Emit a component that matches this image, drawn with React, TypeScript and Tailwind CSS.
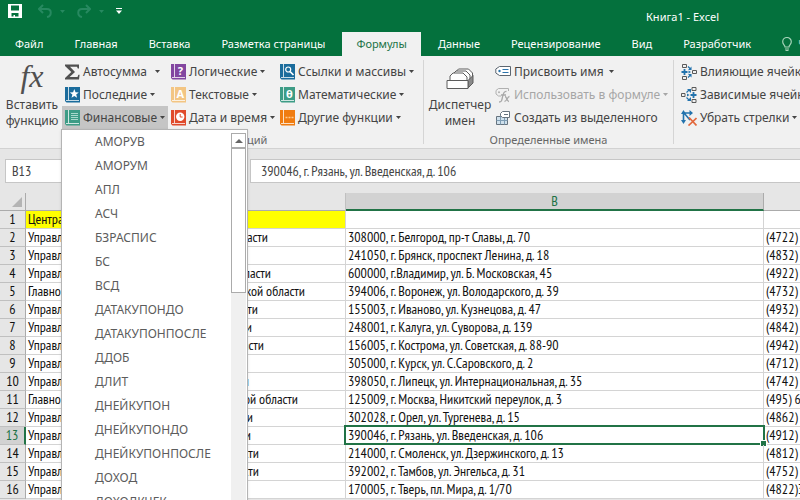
import type { ReactNode } from "react"

const tabs = [
  "Файл",
  "Главная",
  "Вставка",
  "Разметка страницы",
  "Формулы",
  "Данные",
  "Рецензирование",
  "Вид",
  "Разработчик",
]

const financeFunctions = [
  "АМОРУВ",
  "АМОРУМ",
  "АПЛ",
  "АСЧ",
  "БЗРАСПИС",
  "БС",
  "ВСД",
  "ДАТАКУПОНДО",
  "ДАТАКУПОНПОСЛЕ",
  "ДДОБ",
  "ДЛИТ",
  "ДНЕЙКУПОН",
  "ДНЕЙКУПОНДО",
  "ДНЕЙКУПОНПОСЛЕ",
  "ДОХОД",
  "ДОХОДКЧЕК",
]

// tailWidth is how far the office name runs from the left edge of column A
const rows = [
  { head: "Центральный", tail: "", tailWidth: 0, address: "", phone: "" },
  { head: "Управление", tail: "области", tailWidth: 242, address: "308000, г. Белгород, пр-т Славы, д. 70", phone: "(4722)" },
  { head: "Управление", tail: "", tailWidth: 0, address: "241050, г. Брянск, проспект Ленина, д. 18", phone: "(4832)" },
  { head: "Управление", tail: "области", tailWidth: 245, address: "600000, г.Владимир, ул. Б. Московская, 45", phone: "(4922)" },
  { head: "Главное", tail: "ской области", tailWidth: 279, address: "394006, г. Воронеж, ул. Володарского, д. 39", phone: "(4732)" },
  { head: "Управление", tail: "области", tailWidth: 232, address: "155003, г. Иваново, ул. Кузнецова, д. 47", phone: "(4932)" },
  { head: "Управление", tail: "области", tailWidth: 226, address: "248001, г. Калуга, ул. Суворова, д. 139", phone: "(4842)" },
  { head: "Управление", tail: "области", tailWidth: 238, address: "156005, г. Кострома, ул. Советская, д. 88-90", phone: "(4942)" },
  { head: "Управление", tail: "", tailWidth: 0, address: "305000, г. Курск, ул. С.Саровского, д. 2", phone: "(4712)" },
  { head: "Управление", tail: "области", tailWidth: 223, address: "398050, г. Липецк, ул. Интернациональная, д. 35", phone: "(4742)" },
  { head: "Главное", tail: "ской области", tailWidth: 272, address: "125009, г. Москва, Никитский переулок, д. 3", phone: "(495) 694" },
  { head: "Управление", tail: "области", tailWidth: 227, address: "302028, г. Орел, ул. Тургенева, д. 15", phone: "(4862) 4" },
  { head: "Управление", tail: "области", tailWidth: 225, address: "390046, г. Рязань, ул. Введенская, д. 106", phone: "(4912)" },
  { head: "Управление", tail: "области", tailWidth: 233, address: "214000, г. Смоленск, ул. Дзержинского, д. 13", phone: "(4812)" },
  { head: "Управление", tail: "области", tailWidth: 233, address: "392002, г. Тамбов, ул. Энгельса, д. 31", phone: "(4752)" },
  { head: "Управление", tail: "", tailWidth: 0, address: "170005, г. Тверь, пл. Мира, д. 1/70", phone: "(4822)34" },
]

const activeRow = 13

function Caret({ className = "" }: { className?: string }) {
  return (
    <svg viewBox="0 0 5 3" className={`h-[3px] w-[5px] shrink-0 ${className}`} fill="currentColor" aria-hidden="true">
      <path d="M0 0h5L2.5 3z" />
    </svg>
  )
}

function BookIcon({ color, children }: { color: string; children: ReactNode }) {
  return (
    <svg viewBox="0 0 15 16" className="h-4 w-[15px] shrink-0" aria-hidden="true">
      <path d="M0 0h15v15.500H1.500L0 14z" fill={color} />
      <path d="M3.500 0v13M1 13.500h13" stroke="#fff" strokeWidth="0.900" fill="none" opacity="0.850" />
      {children}
    </svg>
  )
}

function SigmaIcon() {
  return (
    <svg viewBox="0 0 15 16" className="h-4 w-[15px] shrink-0" aria-hidden="true">
      <path
        d="M0 .5h14v4h-1.200L12 2.800H5L10 8l-5.400 5H12.500l.9-2.200h1.200L14 15.500H0v-1.600L6.300 8 0 2z"
        fill="#505050"
      />
    </svg>
  )
}

function StarBook() {
  return (
    <BookIcon color="#1b6c9c">
      <path d="M9.300 2l1.200 3.200 3.300.2-2.600 2.100.9 3.200-2.800-1.800-2.800 1.800.9-3.200-2.600-2.100 3.300-.2z" fill="#fff" />
    </BookIcon>
  )
}

function FinanceBook() {
  return (
    <BookIcon color="#3d9c86">
      <path d="M6 3.500h7M6 5.500h7M6 7.500h7M6 9.500h7" stroke="#b5e0d4" strokeWidth="0.900" />
    </BookIcon>
  )
}

function LetterBook({ color, letter }: { color: string; letter: string }) {
  return (
    <BookIcon color={color}>
      <text x="9.300" y="11" textAnchor="middle" fontSize="11" fontWeight="700" fill="#fff">
        {letter}
      </text>
    </BookIcon>
  )
}

function ClockBook() {
  return (
    <BookIcon color="#e04a2b">
      <circle cx="9.200" cy="6.800" r="4.200" fill="#fff" />
      <path d="M9.200 4v3h2.400" fill="none" stroke="#e04a2b" />
    </BookIcon>
  )
}

function SearchBook() {
  return (
    <BookIcon color="#1b6c9c">
      <circle cx="8.200" cy="5.500" r="2.500" fill="none" stroke="#fff" strokeWidth="1.200" />
      <path d="M10 7.500l3.500 3.500" stroke="#fff" strokeWidth="1.700" />
    </BookIcon>
  )
}

function OtherBook() {
  return (
    <BookIcon color="#f07c10">
      <path d="M5.500 7.500h2M8.500 7.500h2M11.500 7.500h2" stroke="#ffc98a" strokeWidth="1.500" />
    </BookIcon>
  )
}

function TagIcon() {
  return (
    <svg viewBox="0 0 16 16" className="size-4 shrink-0" fill="none" aria-hidden="true">
      <path d="M4.500 2.500h11v9h-11L.8 9V5z" fill="#fff" stroke="#5c6670" strokeLinejoin="round" />
      <circle cx="4.500" cy="7" r="1.200" fill="#2b74ad" />
      <path d="M7.500 5.500h6M7.500 8.500h6" stroke="#2b74ad" strokeWidth="1.200" />
    </svg>
  )
}

function UseInFormulaIcon() {
  return (
    <svg viewBox="0 0 16 16" className="size-4 shrink-0" fill="none" aria-hidden="true">
      <path d="M13.500 4V1.500H3.500L1 3.500V7l2.500 2H6" stroke="#b0b0b0" />
      <circle cx="4" cy="5.200" r="1" fill="#b0b0b0" />
      <path d="M4 15c2.500 0 2.700-1 3.500-5S9 4 11.500 4.500M6 8h5M10 9.500c2 0 1.500 5 4 5M14.500 9.500c-2 0-3 5-5 5" stroke="#a8a8a8" strokeWidth="1.300" />
    </svg>
  )
}

function CreateFromIcon() {
  return (
    <svg viewBox="0 0 16 16" className="size-4 shrink-0" fill="none" aria-hidden="true">
      <path d="M1.500 6.500h11v8h-11z" fill="#cfe0ec" stroke="#66737e" />
      <path d="M1.500 10.500h11M5.500 6.500v8M9.500 6.500v8" stroke="#7f9db4" />
      <path d="M5.500 3.500l2-2h7v6h-7l-2-1.700z" fill="#fff" stroke="#66737e" />
      <path d="M9 4.500h4" stroke="#66737e" />
    </svg>
  )
}

function PrecedentsIcon() {
  return (
    <svg viewBox="0 0 16 16" className="size-4 shrink-0" fill="none" aria-hidden="true">
      <path d="M1.500.5h4v3h-4zM1.500 12.500h4v3h-4zM11.500 6.500h4v3h-4z" stroke="#5a5a5a" />
      <path d="M.5 8h6M3.500 5v6" stroke="#2373ad" strokeWidth="1.800" />
      <path d="M7 2.500l3 3M7 13.500l3-3" stroke="#2373ad" strokeWidth="1.200" />
      <path d="M10.500 2.500V6H7zM10.500 13.500V10H7zM7.500 6.500L10 8 7.500 9.500z" fill="#2373ad" />
    </svg>
  )
}

function DependentsIcon() {
  return (
    <svg viewBox="0 0 16 16" className="size-4 shrink-0" fill="none" aria-hidden="true">
      <path d="M.5 6.500h3.500v3H.5zM11 .5h4v3h-4zM11 12.500h4v3h-4z" stroke="#5a5a5a" />
      <path d="M9.500 8h6M12.500 5v6" stroke="#2373ad" strokeWidth="1.800" />
      <path d="M5.500 5.500l3-3M5.500 10.500l3 3" stroke="#2373ad" strokeWidth="1.200" />
      <path d="M6 2h4v4zM6 14h4v-4zM6 6.500L8.500 8 6 9.500z" fill="#2373ad" />
    </svg>
  )
}

function RemoveArrowsIcon() {
  return (
    <svg viewBox="0 0 16 16" className="size-4 shrink-0" fill="none" aria-hidden="true">
      <path d="M2.500 2v10M2 3h8M3 3l6 7" stroke="#2373ad" strokeWidth="1.600" />
      <path d="M0 4l2.500-4L5 4zM8.500 0L12 3 8.500 6zM0 10h5l-2.500 4z" fill="#2373ad" />
      <path d="M8 7.500l7.500 8M15.500 8L7.500 15.500" stroke="#e2683c" strokeWidth="1.700" />
    </svg>
  )
}

function NameManagerIcon() {
  return (
    <svg viewBox="0 0 28 22" className="h-[22px] w-7" fill="#fff" stroke="#5c5c5c" aria-hidden="true">
      <path d="M9.500 8V4l3-3h10l4 4v6l-3 3" />
      <path d="M7 10V6l3-3h10l4 4v6" />
      <path d="M4 12V8l3-3h10l4 4v4" />
      <path d="M22 12.500l5-5V15l-5 5z" fill="#8a8a8a" />
      <path d="M1 12.500h21v8H1z" />
    </svg>
  )
}

type RibbonButtonProps = {
  icon: ReactNode
  label: string
  caret?: boolean
  caretClass?: string
  disabled?: boolean
  active?: boolean
}

function RibbonButton({ icon, label, caret = true, caretClass = "", disabled, active }: RibbonButtonProps) {
  return (
    <button
      type="button"
      disabled={disabled}
      aria-expanded={active}
      className={`flex h-[23px] w-full items-center gap-[3px] whitespace-nowrap pl-[3px] ${
        active ? "bg-[#c5c5c5]" : ""
      } ${disabled ? "text-[#a6a6a6]" : ""}`}
    >
      {icon}
      <span>{label}</span>
      {caret && <Caret className={caretClass} />}
    </button>
  )
}

function FinanceMenu() {
  return (
    <div className="absolute -left-px top-full z-10 flex w-[187px] border border-[#b4b4b4] bg-white shadow-sm">
      <ul role="menu" className="flex-1 text-[#5c5c5c]">
        {financeFunctions.map((name) => (
          <li key={name} role="none">
            <button type="button" role="menuitem" className="h-6 w-full pl-[33px] text-left">
              {name}
            </button>
          </li>
        ))}
      </ul>
      <div className="mr-px mt-[3px] w-[15px] bg-[#f0f0f0]">
        <button
          type="button"
          aria-label="Прокрутить вверх"
          className="flex h-[15px] w-full items-center justify-center border border-[#ababab] bg-white"
        >
          <svg viewBox="0 0 8 4" className="h-1 w-2 fill-[#666]" aria-hidden="true">
            <path d="M0 4L4 0l4 4z" />
          </svg>
        </button>
        <div className="h-[145px] border border-[#ababab] bg-white" />
      </div>
    </div>
  )
}

function TitleBar() {
  return (
    <header className="flex h-8 items-center justify-between pl-2 text-white">
      <div className="flex h-[22px] items-center self-start">
        <button type="button" aria-label="Сохранить">
          <svg viewBox="0 0 14 14" className="size-[14px]" aria-hidden="true">
            <path d="M0 0h14v14H0z" fill="#fff" />
            <path d="M3 1.500h8v5H3zM3.500 9h7v3.500H7V11H5.500v1.500h-2z" fill="#04713d" />
          </svg>
        </button>
        <button type="button" aria-label="Отменить" className="ml-4 flex items-center gap-2 text-[#278960]">
          <svg viewBox="0 0 14 14" className="size-[14px]" fill="none" stroke="currentColor" strokeWidth="2" aria-hidden="true">
            <path d="M5 1L1 5l4 4M1.500 5H9c5 0 5 7 0 8" />
          </svg>
          <Caret />
        </button>
        <button type="button" aria-label="Вернуть" className="ml-3 flex items-center gap-2 text-[#278960]">
          <svg viewBox="0 0 14 14" className="size-[14px]" fill="none" stroke="currentColor" strokeWidth="2" aria-hidden="true">
            <path d="M9 1l4 4-4 4M12.500 5H5c-5 0-5 7 0 8" />
          </svg>
          <Caret />
        </button>
        <button type="button" aria-label="Настройка панели" className="ml-3">
          <svg viewBox="0 0 6 6" className="size-[6px] fill-white" aria-hidden="true">
            <path d="M0 0h6v1H0zM0 2.500h6L3 6z" />
          </svg>
        </button>
      </div>
      <h1 className="mr-[81px] pt-[2px] text-[11px]">Книга1 - Excel</h1>
    </header>
  )
}

function TabBar() {
  return (
    <nav className="flex h-6 items-center gap-[3px] whitespace-nowrap pl-px text-[11px] text-white">
      {tabs.map((tab) => (
        <a
          key={tab}
          href="#"
          className={`h-6 shrink-0 px-[14px] leading-6 ${tab === "Формулы" ? "bg-[#f1f1f1] text-[#217346]" : ""}`}
        >
          {tab}
        </a>
      ))}
      <a href="#" className="flex shrink-0 items-center gap-[6px] pl-[14px] text-[#a5d3b8]">
        <svg viewBox="0 0 10 14" className="h-[14px] w-[10px]" fill="none" stroke="currentColor" aria-hidden="true">
          <path d="M3 10C3 8 .7 7.500.7 4.800a4.300 4.300 0 018.600 0C9.300 7.500 7 8 7 10zM3 12h4M3.500 13.500h3" strokeWidth="1.200" />
        </svg>
        Что вы хотите сделать?
      </a>
    </nav>
  )
}

function Ribbon() {
  return (
    <div className="flex h-[93px] border-b border-[#d2d2d2] bg-[#f1f1f1] pt-1 text-[#444]">
      <section className="w-[423px] shrink-0">
        <div className="flex">
          <button type="button" className="flex w-[62px] shrink-0 flex-col items-center pl-[2px] leading-4">
            <span className="h-[37px] font-['Liberation_Serif',serif] text-[32px] italic leading-8 text-[#505050]">fx</span>
            <span>Вставить</span>
            <span>функцию</span>
          </button>
          <div className="w-[106px] shrink-0">
            <RibbonButton icon={<SigmaIcon />} label="Автосумма" caretClass="ml-[5px]" />
            <RibbonButton icon={<StarBook />} label="Последние" />
            <div className="relative">
              <RibbonButton icon={<FinanceBook />} label="Финансовые" active />
              <FinanceMenu />
            </div>
          </div>
          <div className="w-[109px] shrink-0">
            <RibbonButton icon={<LetterBook color="#8246a0" letter="?" />} label="Логические" />
            <RibbonButton icon={<LetterBook color="#f3c583" letter="A" />} label="Текстовые" />
            <RibbonButton icon={<ClockBook />} label="Дата и время" />
          </div>
          <div className="flex-1">
            <RibbonButton icon={<SearchBook />} label="Ссылки и массивы" />
            <RibbonButton icon={<LetterBook color="#3d9c86" letter="θ" />} label="Математические" />
            <RibbonButton icon={<OtherBook />} label="Другие функции" />
          </div>
        </div>
        <p className="text-center text-[11px] leading-[22px] text-[#666]">Библиотека функций</p>
      </section>
      <section className="mb-1 w-[251px] shrink-0 border-x border-[#d5d5d5]">
        <div className="flex">
          <button type="button" className="flex w-[68px] shrink-0 flex-col items-center pl-1 leading-4">
            <span className="flex h-[37px] items-start pt-2">
              <NameManagerIcon />
            </span>
            <span>Диспетчер</span>
            <span>имен</span>
          </button>
          <div className="flex-1">
            <RibbonButton icon={<TagIcon />} label="Присвоить имя" caretClass="ml-[2px]" />
            <RibbonButton icon={<UseInFormulaIcon />} label="Использовать в формуле" disabled />
            <RibbonButton icon={<CreateFromIcon />} label="Создать из выделенного" caret={false} />
          </div>
        </div>
        <p className="text-center text-[11px] leading-[22px] text-[#666]">Определенные имена</p>
      </section>
      <section className="min-w-0 flex-1 overflow-hidden pl-1">
        <RibbonButton icon={<PrecedentsIcon />} label="Влияющие ячейки" caret={false} />
        <RibbonButton icon={<DependentsIcon />} label="Зависимые ячейки" caret={false} />
        <RibbonButton icon={<RemoveArrowsIcon />} label="Убрать стрелки" />
      </section>
    </div>
  )
}

function FormulaBar() {
  return (
    <div className="flex gap-[101px] py-[10px] pl-[5px] font-['PT_Sans_Narrow','Roboto_Condensed',sans-serif] text-[14px]">
      <input
        aria-label="Имя ячейки"
        defaultValue="B13"
        className="h-6 w-36 border border-[#c6c6c6] bg-white px-[6px] text-[#444]"
      />
      <input
        aria-label="Строка формул"
        defaultValue="390046, г. Рязань, ул. Введенская, д. 106"
        className="h-6 min-w-0 flex-1 border border-r-0 border-[#c6c6c6] bg-white px-[10px] text-[#444]"
      />
    </div>
  )
}

function Sheet() {
  return (
    <table className="w-full table-fixed border-separate border-spacing-0 whitespace-nowrap font-['PT_Sans_Narrow','Roboto_Condensed',sans-serif] text-[14px] leading-[17px] text-[#111]">
      <colgroup>
        <col className="w-[26px]" />
        <col className="w-[320px]" />
        <col className="w-[418px]" />
        <col />
      </colgroup>
      <thead>
        <tr className="h-[18px]">
          <th className="border-b border-r border-[#ababab] p-0">
            <svg viewBox="0 0 10 10" className="ml-3 size-[10px] fill-[#b4b4b4]" aria-hidden="true">
              <path d="M10 0v10H0z" />
            </svg>
          </th>
          <th className="border-b border-r border-b-[#ababab] border-r-[#c0c0c0] p-0 font-normal">A</th>
          <th className="border-b-2 border-r border-b-[#217346] border-r-[#ababab] bg-[#d2d2d2] p-0 font-normal leading-4 text-[#217346]">
            B
          </th>
          <th className="border-b border-[#ababab] p-0" />
        </tr>
      </thead>
      <tbody>
        {rows.map((row, i) => {
          const n = i + 1
          const active = n === activeRow
          return (
            <tr key={n} className="h-[18px] bg-white">
              <th
                className={`border-b border-b-[#c0c0c0] p-0 text-center font-normal ${
                  active
                    ? "border-r-2 border-r-[#217346] bg-[#d2d2d2] text-[#217346]"
                    : "border-r border-r-[#ababab] bg-[#e6e6e6]"
                }`}
              >
                {n}
              </th>
              <td className={`border-b border-r border-[#d4d4d4] p-0 ${n === 1 ? "bg-[#ffff00]" : ""}`}>
                <div className="flex justify-between overflow-hidden" style={row.tail ? { width: row.tailWidth } : undefined}>
                  <span className="pl-[2px]">{row.head}</span>
                  <span>{row.tail}</span>
                </div>
              </td>
              <td className="relative border-b border-r border-[#d4d4d4] p-0 pl-[2px]">
                {row.address}
                {active && (
                  <div className="pointer-events-none absolute -inset-x-[2px] -bottom-[1px] -top-[2px] border-2 border-[#217346]">
                    <div className="absolute -bottom-[4px] -right-[4px] size-[7px] border border-white bg-[#217346]" />
                  </div>
                )}
              </td>
              <td className="overflow-hidden border-b border-[#d4d4d4] p-0 pl-[2px]">{row.phone}</td>
            </tr>
          )
        })}
      </tbody>
    </table>
  )
}

export default function App() {
  return (
    <main className="h-screen overflow-hidden bg-[#e6e6e6] font-['Noto_Sans','Open_Sans',sans-serif] text-[12px]">
      <div className="bg-[#04713d]">
        <TitleBar />
        <TabBar />
      </div>
      <Ribbon />
      <FormulaBar />
      <Sheet />
    </main>
  )
}
